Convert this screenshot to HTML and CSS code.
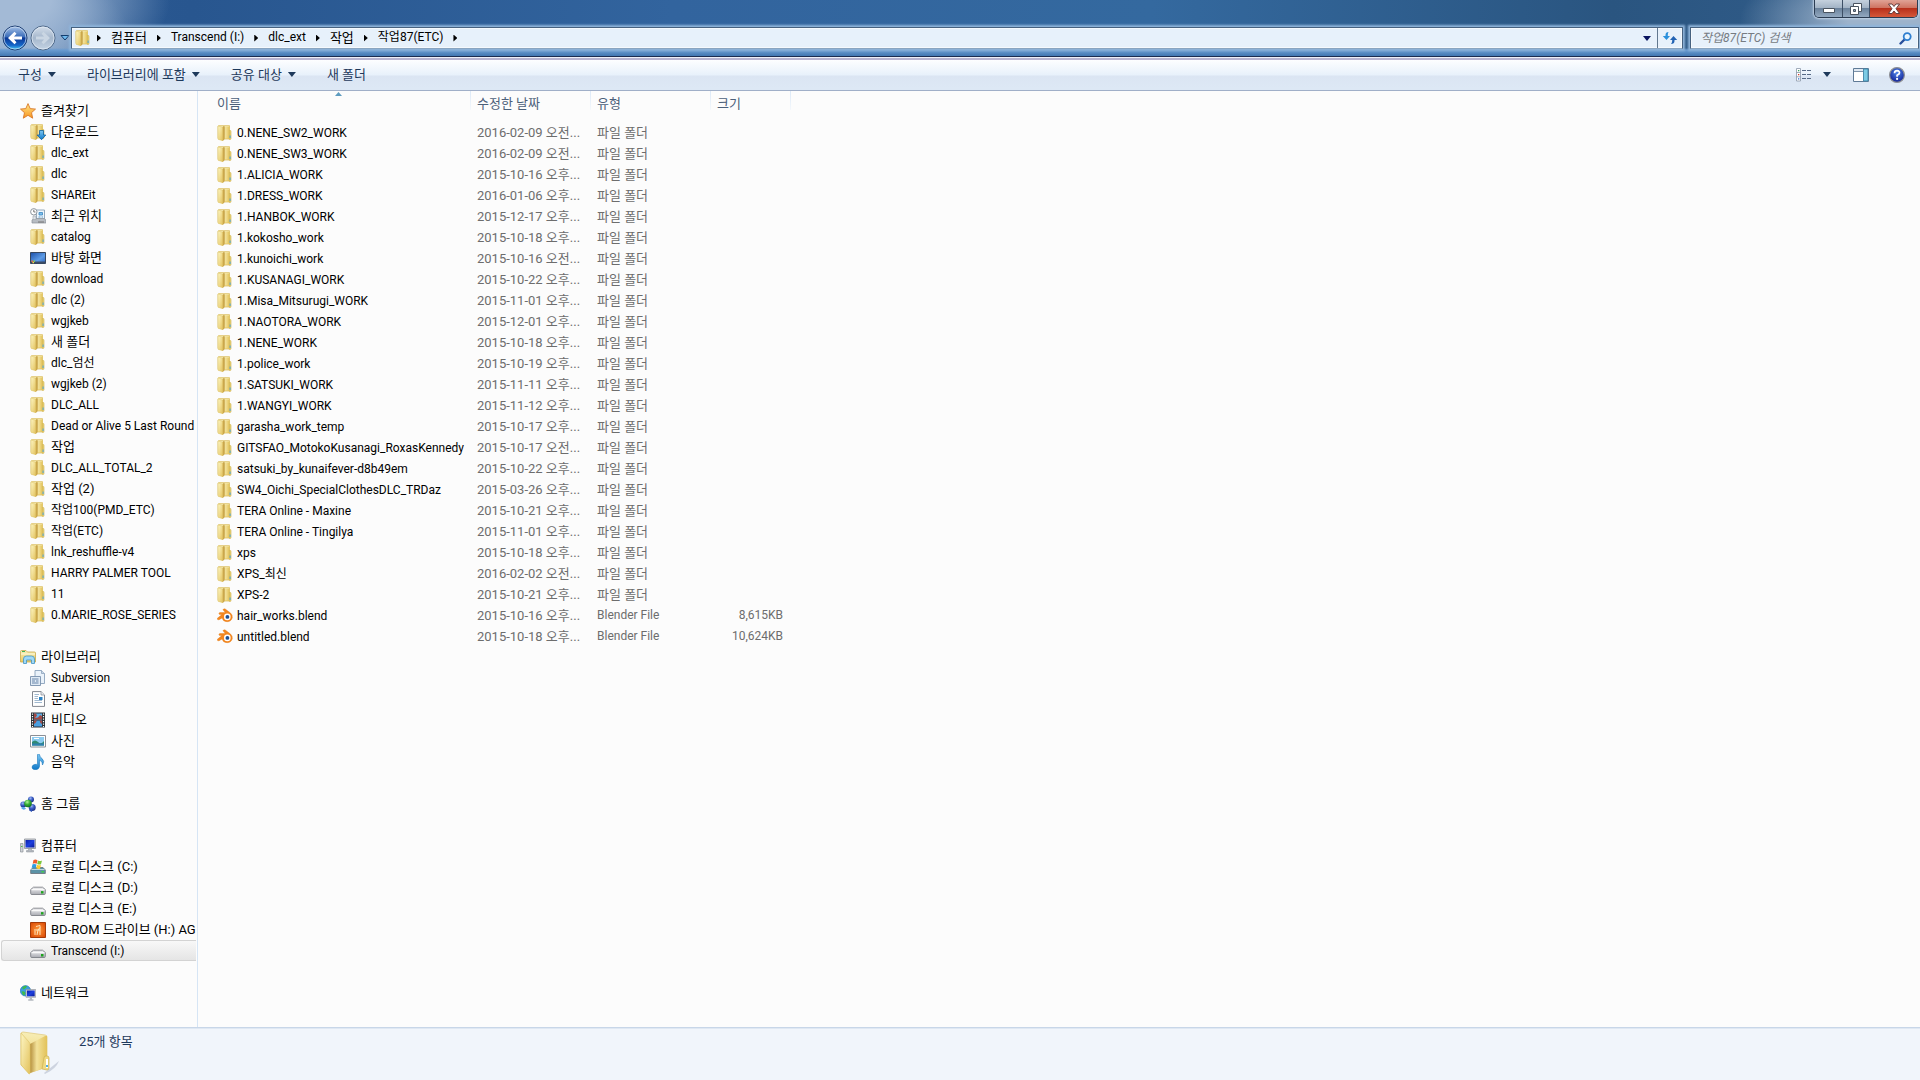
FILE: index.html
```
<!DOCTYPE html>
<html lang="ko">
<head>
<meta charset="utf-8">
<title>작업87(ETC)</title>
<link rel="stylesheet" href="styles.css">
</head>
<body>
<svg class="defs" width="0" height="0" aria-hidden="true">
  <defs>
    <linearGradient id="gFront" x1="0" y1="0" x2="1" y2="1"><stop offset="0" stop-color="#fdf6c4"/><stop offset="1" stop-color="#e3c25c"/></linearGradient>
    <linearGradient id="gBack" x1="0" y1="0" x2="1" y2="0"><stop offset="0" stop-color="#b58f3c"/><stop offset=".4" stop-color="#f3e29a"/><stop offset="1" stop-color="#e2c25a"/></linearGradient>
    <linearGradient id="gBack2" x1="0" y1="0" x2="0" y2="1"><stop offset="0" stop-color="#f7eeb8"/><stop offset="1" stop-color="#ecca5e"/></linearGradient>
    <linearGradient id="gStar" x1="0" y1="0" x2="0" y2="1"><stop offset="0" stop-color="#ffe98c"/><stop offset="1" stop-color="#f7941d"/></linearGradient>
    <linearGradient id="gBlue" x1="0" y1="0" x2="0" y2="1"><stop offset="0" stop-color="#7cc8f4"/><stop offset="1" stop-color="#0f78c8"/></linearGradient>
    <linearGradient id="gScreen" x1="0" y1="0" x2="1" y2="1"><stop offset="0" stop-color="#0a1fa8"/><stop offset=".5" stop-color="#1d3fe0"/><stop offset="1" stop-color="#0b1c96"/></linearGradient>
    <linearGradient id="gDesk" x1="0" y1="0" x2="1" y2="1"><stop offset="0" stop-color="#1b4fa8"/><stop offset=".6" stop-color="#5e9ce6"/><stop offset="1" stop-color="#2a61ba"/></linearGradient>
    <linearGradient id="gDrive" x1="0" y1="0" x2="0" y2="1"><stop offset="0" stop-color="#f4f4f6"/><stop offset="1" stop-color="#a9abb2"/></linearGradient>
    <linearGradient id="gNav" x1="0" y1="0" x2="0" y2="1"><stop offset="0" stop-color="#a9c4e8"/><stop offset=".45" stop-color="#3b6dba"/><stop offset=".5" stop-color="#0b3794"/><stop offset=".8" stop-color="#1565c8"/><stop offset="1" stop-color="#46d2f8"/></linearGradient>
    <linearGradient id="gNavOff" x1="0" y1="0" x2="0" y2="1"><stop offset="0" stop-color="#d5dfeb"/><stop offset=".5" stop-color="#a5b7cc"/><stop offset="1" stop-color="#c5d4e4"/></linearGradient>
    <radialGradient id="gHelp" cx=".5" cy=".35" r=".6"><stop offset="0" stop-color="#4f86ea"/><stop offset="1" stop-color="#16279a"/></radialGradient>
    <radialGradient id="gBall" cx=".4" cy=".3" r=".7"><stop offset="0" stop-color="#9db8f4"/><stop offset=".5" stop-color="#3a5cc4"/><stop offset="1" stop-color="#1b2f86"/></radialGradient>
    <radialGradient id="gBallG" cx=".4" cy=".3" r=".7"><stop offset="0" stop-color="#b4f49a"/><stop offset=".5" stop-color="#35ae35"/><stop offset="1" stop-color="#14701c"/></radialGradient>
    <radialGradient id="gDisc" cx=".5" cy=".5" r=".7"><stop offset="0" stop-color="#ff9a3c"/><stop offset="1" stop-color="#d84300"/></radialGradient>
    <symbol id="folder" viewBox="0 0 16 16">
      <path d="M1 1.5Q1 .6 2 .6H12.500V14H2Q1 14 1 13Z" fill="url(#gBack2)" stroke="#dcc26a" stroke-width=".8"/>
      <path d="M6 1.500H12.500V13.500H7.500Z" fill="url(#gBack)"/>
      <path d="M12.400 5.500H13.500Q14 5.500 14 6.500V13.500Q14 14.500 13 14.500H12.400Z" fill="#e9d377" stroke="#cfae4a" stroke-width=".6"/>
      <path d="M12.600 10.500H13.600V13H12.600Z" fill="#4aa6e0"/>
      <path d="M5 2.300L7.400 1V14.500L5.700 16L5 15.400Z" fill="#c9a548"/>
      <path d="M1 1L5.700 2.300V15.800L1 14.200Z" fill="url(#gFront)" stroke="#dfc56b" stroke-width=".5"/>
    </symbol>
    <symbol id="bigfolder" viewBox="0 0 40 44">
      <path d="M24 42L39 30Q36 38 25 43Z" fill="#8995ab" opacity=".35"/>
      <path d="M1 3Q1 1 3 1L25 4Q27 4 27 6V36L9 42L1 34Z" fill="url(#gBack2)" stroke="#e2cd84" stroke-width=".8"/>
      <path d="M10 13L25 5H27V36L10 42Z" fill="url(#gBack)"/>
      <path d="M24 27Q24 25 26 25H27Q29 25 29 27V37Q29 39 27 39L22 38Z" fill="#efd980" stroke="#cdb052" stroke-width=".7"/>
      <path d="M26 28H28V37H26Z" fill="#fff"/><path d="M26 34H28V36H26Z" fill="#50aee4"/>
      <path d="M1 2L9 11Q10 12 10 14V42Q10 43 9 43L2 35Q1 34 1 33Z" fill="url(#gFront)" stroke="#e0c56b" stroke-width=".7"/>
    </symbol>
    <symbol id="star" viewBox="0 0 16 16"><path d="M8 .6L10.200 5.600L15.500 6.100L11.500 9.700L12.700 15.200L8 12.300L3.300 15.200L4.500 9.700L.5 6.100L5.800 5.600Z" fill="url(#gStar)" stroke="#d9782a" stroke-width=".9"/></symbol>
    <symbol id="download" viewBox="0 0 16 16"><use href="#folder" width="16" height="16"/><path d="M9.500 6.500H13.500V11H15.800L11.500 15.700L7.200 11H9.500Z" fill="url(#gBlue)" stroke="#0c5f9f" stroke-width=".8"/></symbol>
    <symbol id="recent" viewBox="0 0 16 16">
      <path d="M6.500 2H14.500V11H6.500Z" fill="#eef6fc" stroke="#8aa0b4" stroke-width=".9"/><path d="M9 4.500H12.500V7H9ZM8.500 9H10.500M11.500 9H13" fill="#7cc0ee" stroke="#3a86c0" stroke-width=".8"/>
      <path d="M2 12L4 10.500H14L16 12V15H2Z" fill="#b7bcc2" stroke="#8a9098" stroke-width=".7"/><path d="M8 14H14" stroke="#777"/><path d="M3 8H6V11.500H3Z" fill="#dfe3e7" stroke="#9aa2aa" stroke-width=".6"/>
      <circle cx="3.800" cy="3.800" r="3.200" fill="#fff" stroke="#8f979f"/><path d="M3.800 1.800V4H5.500" fill="none" stroke="#555" stroke-width=".8"/>
    </symbol>
    <symbol id="desktop" viewBox="0 0 16 16"><path d="M.5 2.500H15.500V13.500H.5Z" fill="url(#gDesk)" stroke="#37475f"/><path d="M1 11.500H15V13.200H1Z" fill="#3c4c66"/><path d="M1.500 10.500H3V12H1.500Z" fill="#ef6b36"/><path d="M3.500 10.500H5V12H3.500Z" fill="#8bd04a"/><path d="M2.500 12H4V13.200H2.500Z" fill="#ffd34a"/></symbol>
    <symbol id="library" viewBox="0 0 16 16"><path d="M.5 2.500Q.5 1.500 1.500 1.500H6L7.500 3H14.500Q15.500 3 15.500 4V13H.5Z" fill="url(#gBack2)" stroke="#c9a94c" stroke-width=".8"/><path d="M1 5H15" stroke="#fffbe0"/><path d="M2 2.500H5" stroke="#3db35a"/><path d="M3.500 14.500V10Q3.500 7 6.500 7H11.500Q14.500 7 14.500 10V14.500H11.500V11H6.500V14.500Z" fill="#9fd8f6" stroke="#4494c4" stroke-width=".8"/></symbol>
    <symbol id="subversion" viewBox="0 0 16 16"><path d="M5 .500H11.500L14.500 3.500V13.500H5Z" fill="#eaf2fa" stroke="#8ba2bb" stroke-width=".9"/><path d="M11.500 .500V3.500H14.500" fill="#c9d8e8" stroke="#8ba2bb" stroke-width=".8"/><path d="M.5 6.500H10.500V15.500H.5Z" fill="#dfeaf5" stroke="#7890ac" stroke-width=".9"/><path d="M2 9H8.500M2 11H5M6 11H8.500M2 13H8.500" stroke="#5c7ba2" stroke-width=".9"/></symbol>
    <symbol id="docs" viewBox="0 0 16 16"><path d="M2.500 .600H11L14.500 4V15.400H2.500Z" fill="#fff" stroke="#828790"/><path d="M11 .600V4H14.500" fill="#e6e9ee" stroke="#828790" stroke-width=".7"/><path d="M4.500 3.500H9M4.500 5.500H8M4.500 7.500H8M4.500 9.500H12M4.500 11.500H12" stroke="#89a7c4" stroke-width=".8"/><path d="M9 6H12.500V9H9Z" fill="#2b82c4"/></symbol>
    <symbol id="video" viewBox="0 0 16 16"><path d="M1 .500H15V15.500H1Z" fill="#2b3036"/><path d="M4 1.500H12V7.500H4Z" fill="#5cb0e8"/><path d="M4 8.500H12V14.500H4Z" fill="#4a9fe0"/><path d="M4 1.500H6L7 3.500L5 6L8 5.500L10 3L12 4V7.500H4ZM4 8.500H7L5.500 11L4 12ZM12 8.500H9.500L10.500 11L12 12Z" fill="#a34a44"/><path d="M2.500 1.500V15M13.500 1.500V15" stroke="#fff" stroke-width="1.200" stroke-dasharray="1.200 1.300"/></symbol>
    <symbol id="photo" viewBox="0 0 16 16"><path d="M.5 2.500H15.500V14H.5Z" fill="#fff" stroke="#8a8f96"/><path d="M2 4H14V12.500H2Z" fill="#8ccbf0"/><path d="M2 9Q5 6 8 9T14 8V12.500H2Z" fill="#2e8a73"/><path d="M2 10.500H14V12.500H2Z" fill="#2f7fb0"/><path d="M4 5.500H9" stroke="#fff"/></symbol>
    <symbol id="music" viewBox="0 0 16 16"><path d="M7.500 .500Q8.500 .100 9.500 .500Q9.500 3 12 4.500Q15 7 12.500 11Q13 7.500 9.500 6V12.500Q9 15.500 5.500 15.700Q2 15.700 2 13Q2.500 10.300 6 10.300Q7 10.300 7.500 10.700Z" fill="url(#gBlue)" stroke="#1a78bd" stroke-width=".6"/></symbol>
    <symbol id="homegroup" viewBox="0 0 16 16"><circle cx="11" cy="3.500" r="3" fill="url(#gBall)"/><circle cx="3.300" cy="8.500" r="3" fill="url(#gBall)"/><circle cx="12.200" cy="11.500" r="3.500" fill="url(#gBall)"/><circle cx="8" cy="7.500" r="3.800" fill="url(#gBallG)"/><path d="M1 12Q3 10 6 12.500Q5 14 3 13.500Z" fill="#58a8e8"/><path d="M9 14.500L12 13V16Z" fill="#2c53b8"/></symbol>
    <symbol id="computer" viewBox="0 0 16 16"><path d="M.5 5.500H3V14H.5Z" fill="#cfd3d8" stroke="#8c9299" stroke-width=".7"/><path d="M1 8.500H2.500" stroke="#4bc04b"/><path d="M4.500 1H15.500V10.500H4.500Z" fill="#d5d8dd" stroke="#8a9098" stroke-width=".8"/><path d="M5.500 2H14.500V9.500H5.500Z" fill="url(#gScreen)"/><path d="M8.500 10.500H11.500V12.500H13.500V14H6.500V12.500H8.500Z" fill="#b4b9c0" stroke="#888e96" stroke-width=".5"/></symbol>
    <symbol id="drive" viewBox="0 0 16 16"><path d="M.7 9.500L3.500 7.200H12.500L15.300 9.500V13.500Q15.300 14.500 14.300 14.500H1.700Q.7 14.500 .7 13.500Z" fill="url(#gDrive)" stroke="#7d8087" stroke-width=".9"/><path d="M1.500 9.700H14.500" stroke="#fff"/><path d="M11 12.300H13.500" stroke="#1da31d" stroke-width="2.400"/></symbol>
    <symbol id="sysdrive" viewBox="0 0 16 16"><path d="M.7 11L3 8.500H13L15.300 11V14.500H.7Z" fill="#5b92a6" stroke="#6c7780" stroke-width=".9"/><path d="M1.500 10.500H14.500" stroke="#d7e5ec" stroke-width=".8"/><path d="M11.500 12.800H13.800" stroke="#43d043" stroke-width="1.500"/><path d="M3.500 1Q5.500 0 7.500 1.200L6.700 4.800Q5 3.800 2.700 4.700Z" fill="#ee5a2c"/><path d="M8 1.500Q10 2.500 12 1.500L11 5.200Q9.500 6 7.200 5Z" fill="#7dc63c"/><path d="M2.500 5.300Q4.500 4.500 6.500 5.500L5.700 9Q4 8.200 1.700 9Z" fill="#2c9ce4"/><path d="M7 5.800Q9 6.800 11 6L10 9.700Q8.500 10.200 6.200 9.300Z" fill="#ffcb2e"/></symbol>
    <symbol id="bdrom" viewBox="0 0 16 16"><path d="M.5 .500H15.500V15.500H.5Z" fill="url(#gDisc)" stroke="#a43a08"/><path d="M5 13V7M6 4.500L10 3.500V13M7 13L8 8L10 5.500M6 8H10" fill="none" stroke="#ffe2b8"/></symbol>
    <symbol id="network" viewBox="0 0 16 16"><circle cx="5.500" cy="5.800" r="5.200" fill="#3a9fe0" stroke="#1f6fae" stroke-width=".6"/><path d="M2 3Q4.500 0 7 1.200Q6 4 3.500 4.500ZM1.500 6.500Q5 5.500 5.500 8.500Q4.500 11 3 10Z" fill="#3dbb4c"/><path d="M6 4.500H15.700V12.300H6Z" fill="#d5d8dd" stroke="#868c94" stroke-width=".6"/><path d="M7 5.500H14.700V11.300H7Z" fill="url(#gScreen)"/><path d="M9.700 12.300H12V14.300H13.500V15.700H8.200V14.300H9.700Z" fill="#b4b9c0"/></symbol>
    <symbol id="blend" viewBox="0 0 16 16"><path d="M6 1.800Q6.500 .400 8.200 1L13.500 5Q16 7.200 15.300 9.800Q14 13.800 10 13.700Q5.800 13.500 5.200 9.900L2 11.800Q.2 12.200 .3 10.300L5 6.600H2.600Q1.200 5.500 2.600 4.600H8.300Z" fill="#f5871f" stroke="#e0760f" stroke-width=".4"/><circle cx="10.300" cy="8.900" r="3.300" fill="#fff"/><circle cx="10.400" cy="8.900" r="1.900" fill="#1d4f92"/></symbol>
  </defs>
</svg>

<div class="window">
  <header class="frame">
    <div class="caption">
      <div class="caption-buttons">
        <button class="cap min" aria-label="최소화"><svg width="14" height="14" viewBox="0 0 14 14"><path d="M1.500 6.500H12.500V10.500H1.500Z" fill="#fff" stroke="#4a5460"/></svg></button>
        <button class="cap max" aria-label="이전 크기로 복원"><svg width="14" height="14" viewBox="0 0 14 14"><path d="M4.500 1.500H12.500V9.500H4.500Z" fill="#fff" stroke="#4a5460"/><path d="M1.500 4.500H9.500V12.500H1.500Z" fill="#fff" stroke="#4a5460"/><path d="M4.500 7.500H6.500V9.500H4.500Z" fill="#8aa0b8" stroke="#4a5460"/></svg></button>
        <button class="cap close" aria-label="닫기"><svg width="14" height="14" viewBox="0 0 14 14"><path d="M1.500 2H5L7 4.500L9 2H12.500L9 6.700L12.500 11.500H9L7 9L5 11.500H1.500L5 6.700Z" fill="#fff" stroke="#5b3636" stroke-width=".9"/></svg></button>
      </div>
    </div>
    <div class="navbar">
      <div class="travel">
        <button class="round" aria-label="뒤로"><svg width="26" height="26" viewBox="0 0 26 26"><circle cx="13" cy="13" r="12" fill="url(#gNav)" stroke="#1f3f73"/><circle cx="13" cy="13" r="11" fill="none" stroke="#cfe0f4" stroke-opacity=".7"/><path d="M6 13L12.500 6.800L14.500 8.800L12 11.500H20V14.500H12L14.500 17.200L12.500 19.200Z" fill="#fff"/></svg></button>
        <button class="round" aria-label="앞으로"><svg width="26" height="26" viewBox="0 0 26 26"><circle cx="13" cy="13" r="12" fill="url(#gNavOff)" stroke="#4e6888"/><circle cx="13" cy="13" r="11" fill="none" stroke="#e4edf6" stroke-opacity=".7"/><path d="M20 13L13.500 6.800L11.500 8.800L14 11.500H6V14.500H14L11.500 17.200L13.500 19.200Z" fill="#cad6e3"/></svg></button>
        <button class="history" aria-label="최근 페이지"><svg width="10" height="6" viewBox="0 0 10 6"><path d="M1 .500H9L5 5Z" fill="#6fb9ee" stroke="#123c6e"/></svg></button>
      </div>
      <div class="address">
        <svg class="ico" width="16" height="16"><use href="#folder"/></svg>
        <nav class="crumbs" aria-label="주소">
          <i class="arrow"></i><a class="ko" href="#">컴퓨터</a>
          <i class="arrow"></i><a href="#">Transcend (I:)</a>
          <i class="arrow"></i><a href="#">dlc_ext</a>
          <i class="arrow"></i><a class="ko" href="#">작업</a>
          <i class="arrow"></i><a href="#">작업87(ETC)</a>
          <i class="arrow"></i>
        </nav>
        <button class="addr-drop" aria-label="이전 위치"><svg width="8" height="5" viewBox="0 0 8 5"><path d="M0 0H8L4 5Z" fill="#0a1560"/></svg></button>
        <button class="refresh" aria-label="새로 고침"><svg width="16" height="14" viewBox="0 0 16 14"><path d="M6.500 1Q3.500 1 3.500 4V5H.8L4.500 9L8 5H5.800V4Q5.800 2.500 6.500 1Z" fill="#2a90dc"/><path d="M9 13Q12.500 13 12.500 10V9H15.200L11.500 5L8 9H10.200V10Q10.200 11.500 9 13Z" fill="#2263b4"/></svg></button>
      </div>
      <label class="search">
        <input type="search" placeholder="작업87(ETC) 검색" aria-label="작업87(ETC) 검색">
        <svg width="13" height="13" viewBox="0 0 13 13"><path d="M1.500 11.500L5.500 7.500" stroke="#274f9c" stroke-width="2.400" stroke-linecap="round"/><circle cx="8.200" cy="4.600" r="3.500" fill="#eaf6ff" stroke="#2f7fd0" stroke-width="1.800"/></svg>
      </label>
    </div>
  </header>

  <div class="toolbar">
    <button>구성<i class="down"></i></button>
    <button>라이브러리에 포함<i class="down"></i></button>
    <button>공유 대상<i class="down"></i></button>
    <button>새 폴더</button>
    <div class="tools">
      <button aria-label="보기 변경"><svg width="16" height="14" viewBox="0 0 16 14"><path d="M.5 .500H4.500V13H.5ZM.5 4.500H4.500M.5 8.800H4.500" fill="#fff" stroke="#8a97a8" stroke-width=".8"/><path d="M2 2H3.300V3.300H2Z" fill="#3aa05a"/><path d="M2 6H3.300V7.300H2Z" fill="#d03a2a"/><path d="M2 10.300H3.300V11.600H2Z" fill="#2a6ad0"/><path d="M6 2.500H10M11 2.500H15M6 6.500H10M11 6.500H15M6 10.500H10M11 10.500H15" stroke="#566a86"/></svg></button>
      <button class="more" aria-label="추가 옵션"><i class="down"></i></button>
      <button aria-label="미리 보기 창"><svg width="16" height="14" viewBox="0 0 16 14"><path d="M.5 .500H15.500V13.500H.5Z" fill="#fff" stroke="#5f7a96"/><path d="M1 1H10V3.500H1Z" fill="#dfe8f2"/><path d="M1 3.500H10" stroke="#5f7a96" stroke-width=".8"/><path d="M10.500 1H15V13H10.500Z" fill="#7ccbe4" stroke="#3f86a8" stroke-width=".9"/></svg></button>
      <button aria-label="도움말"><svg width="16" height="16" viewBox="0 0 16 16"><circle cx="8" cy="8" r="7.400" fill="url(#gHelp)" stroke="#8e9094" stroke-width="1.200"/><path d="M5.500 6.200Q5.600 3.700 8.100 3.700Q10.600 3.800 10.500 5.900Q10.400 7.300 8.100 8.300V9.700" fill="none" stroke="#fff" stroke-width="1.700"/><circle cx="8.100" cy="11.900" r="1.100" fill="#fff"/></svg></button>
    </div>
  </div>

  <div class="body">
    <nav class="tree" aria-label="탐색 창">
      <section>
        <a class="root ko" href="#"><svg class="ico" width="16" height="16"><use href="#star"/></svg>즐겨찾기</a>
        <a class="ko" href="#"><svg class="ico" width="16" height="16"><use href="#download"/></svg>다운로드</a>
        <a href="#"><svg class="ico" width="16" height="16"><use href="#folder"/></svg>dlc_ext</a>
        <a href="#"><svg class="ico" width="16" height="16"><use href="#folder"/></svg>dlc</a>
        <a href="#"><svg class="ico" width="16" height="16"><use href="#folder"/></svg>SHAREit</a>
        <a class="ko" href="#"><svg class="ico" width="16" height="16"><use href="#recent"/></svg>최근 위치</a>
        <a href="#"><svg class="ico" width="16" height="16"><use href="#folder"/></svg>catalog</a>
        <a class="ko" href="#"><svg class="ico" width="16" height="16"><use href="#desktop"/></svg>바탕 화면</a>
        <a href="#"><svg class="ico" width="16" height="16"><use href="#folder"/></svg>download</a>
        <a href="#"><svg class="ico" width="16" height="16"><use href="#folder"/></svg>dlc (2)</a>
        <a href="#"><svg class="ico" width="16" height="16"><use href="#folder"/></svg>wgjkeb</a>
        <a class="ko" href="#"><svg class="ico" width="16" height="16"><use href="#folder"/></svg>새 폴더</a>
        <a href="#"><svg class="ico" width="16" height="16"><use href="#folder"/></svg>dlc_엄선</a>
        <a href="#"><svg class="ico" width="16" height="16"><use href="#folder"/></svg>wgjkeb (2)</a>
        <a href="#"><svg class="ico" width="16" height="16"><use href="#folder"/></svg>DLC_ALL</a>
        <a href="#"><svg class="ico" width="16" height="16"><use href="#folder"/></svg>Dead or Alive 5 Last Round</a>
        <a class="ko" href="#"><svg class="ico" width="16" height="16"><use href="#folder"/></svg>작업</a>
        <a href="#"><svg class="ico" width="16" height="16"><use href="#folder"/></svg>DLC_ALL_TOTAL_2</a>
        <a class="ko" href="#"><svg class="ico" width="16" height="16"><use href="#folder"/></svg>작업 (2)</a>
        <a href="#"><svg class="ico" width="16" height="16"><use href="#folder"/></svg>작업100(PMD_ETC)</a>
        <a href="#"><svg class="ico" width="16" height="16"><use href="#folder"/></svg>작업(ETC)</a>
        <a href="#"><svg class="ico" width="16" height="16"><use href="#folder"/></svg>lnk_reshuffle-v4</a>
        <a href="#"><svg class="ico" width="16" height="16"><use href="#folder"/></svg>HARRY PALMER TOOL</a>
        <a href="#"><svg class="ico" width="16" height="16"><use href="#folder"/></svg>11</a>
        <a href="#"><svg class="ico" width="16" height="16"><use href="#folder"/></svg>0.MARIE_ROSE_SERIES</a>
      </section>
      <section>
        <a class="root ko" href="#"><svg class="ico" width="16" height="16"><use href="#library"/></svg>라이브러리</a>
        <a href="#"><svg class="ico" width="16" height="16"><use href="#subversion"/></svg>Subversion</a>
        <a class="ko" href="#"><svg class="ico" width="16" height="16"><use href="#docs"/></svg>문서</a>
        <a class="ko" href="#"><svg class="ico" width="16" height="16"><use href="#video"/></svg>비디오</a>
        <a class="ko" href="#"><svg class="ico" width="16" height="16"><use href="#photo"/></svg>사진</a>
        <a class="ko" href="#"><svg class="ico" width="16" height="16"><use href="#music"/></svg>음악</a>
      </section>
      <section>
        <a class="root ko" href="#"><svg class="ico" width="16" height="16"><use href="#homegroup"/></svg>홈 그룹</a>
      </section>
      <section>
        <a class="root ko" href="#"><svg class="ico" width="16" height="16"><use href="#computer"/></svg>컴퓨터</a>
        <a class="ko" href="#"><svg class="ico" width="16" height="16"><use href="#sysdrive"/></svg>로컬 디스크 (C:)</a>
        <a class="ko" href="#"><svg class="ico" width="16" height="16"><use href="#drive"/></svg>로컬 디스크 (D:)</a>
        <a class="ko" href="#"><svg class="ico" width="16" height="16"><use href="#drive"/></svg>로컬 디스크 (E:)</a>
        <a class="ko" href="#"><svg class="ico" width="16" height="16"><use href="#bdrom"/></svg>BD-ROM 드라이브 (H:) AG</a>
        <a class="selected" href="#"><svg class="ico" width="16" height="16"><use href="#drive"/></svg>Transcend (I:)</a>
      </section>
      <section>
        <a class="root ko" href="#"><svg class="ico" width="16" height="16"><use href="#network"/></svg>네트워크</a>
      </section>
    </nav>

    <main class="files">
      <table>
        <colgroup><col class="c-name"><col class="c-date"><col class="c-type"><col class="c-size"></colgroup>
        <thead>
          <tr><th>이름<svg class="sort" width="7" height="4" viewBox="0 0 7 4"><path d="M0 4L3.500 0L7 4Z" fill="#5d9bbf"/></svg></th><th>수정한 날짜</th><th>유형</th><th>크기</th></tr>
        </thead>
        <tbody>
          <tr><td><svg class="ico" width="16" height="16"><use href="#folder"/></svg>0.NENE_SW2_WORK</td><td>2016-02-09 오전...</td><td>파일 폴더</td><td></td></tr>
          <tr><td><svg class="ico" width="16" height="16"><use href="#folder"/></svg>0.NENE_SW3_WORK</td><td>2016-02-09 오전...</td><td>파일 폴더</td><td></td></tr>
          <tr><td><svg class="ico" width="16" height="16"><use href="#folder"/></svg>1.ALICIA_WORK</td><td>2015-10-16 오후...</td><td>파일 폴더</td><td></td></tr>
          <tr><td><svg class="ico" width="16" height="16"><use href="#folder"/></svg>1.DRESS_WORK</td><td>2016-01-06 오후...</td><td>파일 폴더</td><td></td></tr>
          <tr><td><svg class="ico" width="16" height="16"><use href="#folder"/></svg>1.HANBOK_WORK</td><td>2015-12-17 오후...</td><td>파일 폴더</td><td></td></tr>
          <tr><td><svg class="ico" width="16" height="16"><use href="#folder"/></svg>1.kokosho_work</td><td>2015-10-18 오후...</td><td>파일 폴더</td><td></td></tr>
          <tr><td><svg class="ico" width="16" height="16"><use href="#folder"/></svg>1.kunoichi_work</td><td>2015-10-16 오전...</td><td>파일 폴더</td><td></td></tr>
          <tr><td><svg class="ico" width="16" height="16"><use href="#folder"/></svg>1.KUSANAGI_WORK</td><td>2015-10-22 오후...</td><td>파일 폴더</td><td></td></tr>
          <tr><td><svg class="ico" width="16" height="16"><use href="#folder"/></svg>1.Misa_Mitsurugi_WORK</td><td>2015-11-01 오후...</td><td>파일 폴더</td><td></td></tr>
          <tr><td><svg class="ico" width="16" height="16"><use href="#folder"/></svg>1.NAOTORA_WORK</td><td>2015-12-01 오후...</td><td>파일 폴더</td><td></td></tr>
          <tr><td><svg class="ico" width="16" height="16"><use href="#folder"/></svg>1.NENE_WORK</td><td>2015-10-18 오후...</td><td>파일 폴더</td><td></td></tr>
          <tr><td><svg class="ico" width="16" height="16"><use href="#folder"/></svg>1.police_work</td><td>2015-10-19 오후...</td><td>파일 폴더</td><td></td></tr>
          <tr><td><svg class="ico" width="16" height="16"><use href="#folder"/></svg>1.SATSUKI_WORK</td><td>2015-11-11 오후...</td><td>파일 폴더</td><td></td></tr>
          <tr><td><svg class="ico" width="16" height="16"><use href="#folder"/></svg>1.WANGYI_WORK</td><td>2015-11-12 오후...</td><td>파일 폴더</td><td></td></tr>
          <tr><td><svg class="ico" width="16" height="16"><use href="#folder"/></svg>garasha_work_temp</td><td>2015-10-17 오후...</td><td>파일 폴더</td><td></td></tr>
          <tr><td><svg class="ico" width="16" height="16"><use href="#folder"/></svg>GITSFAO_MotokoKusanagi_RoxasKennedy</td><td>2015-10-17 오전...</td><td>파일 폴더</td><td></td></tr>
          <tr><td><svg class="ico" width="16" height="16"><use href="#folder"/></svg>satsuki_by_kunaifever-d8b49em</td><td>2015-10-22 오후...</td><td>파일 폴더</td><td></td></tr>
          <tr><td><svg class="ico" width="16" height="16"><use href="#folder"/></svg>SW4_Oichi_SpecialClothesDLC_TRDaz</td><td>2015-03-26 오후...</td><td>파일 폴더</td><td></td></tr>
          <tr><td><svg class="ico" width="16" height="16"><use href="#folder"/></svg>TERA Online - Maxine</td><td>2015-10-21 오후...</td><td>파일 폴더</td><td></td></tr>
          <tr><td><svg class="ico" width="16" height="16"><use href="#folder"/></svg>TERA Online - Tingilya</td><td>2015-11-01 오후...</td><td>파일 폴더</td><td></td></tr>
          <tr><td><svg class="ico" width="16" height="16"><use href="#folder"/></svg>xps</td><td>2015-10-18 오후...</td><td>파일 폴더</td><td></td></tr>
          <tr><td><svg class="ico" width="16" height="16"><use href="#folder"/></svg>XPS_최신</td><td>2016-02-02 오전...</td><td>파일 폴더</td><td></td></tr>
          <tr><td><svg class="ico" width="16" height="16"><use href="#folder"/></svg>XPS-2</td><td>2015-10-21 오후...</td><td>파일 폴더</td><td></td></tr>
          <tr><td><svg class="ico" width="16" height="16"><use href="#blend"/></svg>hair_works.blend</td><td>2015-10-16 오후...</td><td class="latin">Blender File</td><td>8,615KB</td></tr>
          <tr><td><svg class="ico" width="16" height="16"><use href="#blend"/></svg>untitled.blend</td><td>2015-10-18 오후...</td><td class="latin">Blender File</td><td>10,624KB</td></tr>
        </tbody>
      </table>
    </main>
  </div>

  <footer class="status">
    <svg width="40" height="44"><use href="#bigfolder"/></svg>
    <p>25개 항목</p>
  </footer>
</div>
</body>
</html>
```
FILE: styles.css
```
* { box-sizing: border-box; }

body {
  margin: 0;
  font: 12px/21px Roboto, "Noto Sans CJK KR", sans-serif;
  color: #000;
  background: #fcfcfc;
}

button {
  margin: 0;
  padding: 0;
  border: 0;
  background: none;
  color: inherit;
  font: inherit;
}

a { color: inherit; text-decoration: none; }
svg { display: block; flex: none; }
.defs { position: absolute; }

.window {
  display: flex;
  flex-direction: column;
  min-height: 100vh;
}

/* Glass frame: caption buttons and address bar */
.frame {
  border-bottom: 1px solid #1c2c50;
  background:
    linear-gradient(to bottom, transparent 48px, #6a9bd0 50px, #4378b2 56px),
    radial-gradient(ellipse 170px 90px at 0 0, #a3bad6 30%, transparent),
    radial-gradient(ellipse 130px 80px at 0 40px, #86a5cb 20%, transparent),
    radial-gradient(ellipse 180px 70px at 100% 20px, #9db3cb 40%, transparent),
    linear-gradient(to right, #2c5a94, #28568f 10%, #32649e 35%, #34699f 60%, #2a5580 84%, #335e8c);
}

.caption {
  display: flex;
  justify-content: flex-end;
  height: 26px;
  padding-right: 2px;
}

.caption-buttons {
  display: flex;
  height: 18px;
  border: 1px solid #2b3c52;
  border-top: 0;
  border-radius: 0 0 5px 5px;
  box-shadow: 0 0 2px 1px #c3d3e6;
  overflow: hidden;
}

.cap {
  display: grid;
  place-items: center;
  width: 28px;
  border-right: 1px solid #3d4f66;
  background: linear-gradient(#c5d1de, #a3b4c6 45%, #6b829c 50%, #93a9c0);
}
.cap.max { width: 27px; }
.cap.close {
  width: 47px;
  border-right: 0;
  background: linear-gradient(#e0a396, #cf7462 45%, #b8301b 50%, #d5583a);
}

.navbar {
  display: flex;
  align-items: center;
  height: 30px;
  padding: 0 1px 6px 2px;
}

.travel {
  display: flex;
  align-items: center;
  gap: 2px;
  width: 69px;
  height: 26px;
}
.history { margin-left: 2px; }

.address,
.search {
  display: flex;
  align-items: center;
  height: 22px;
  border: 1px solid #46617f;
  border-bottom-color: #8aa5c0;
  background: #e7f1fb;
  box-shadow: inset 0 0 0 1px #f5f9fd, 0 0 2px 2px #8fb4da;
}

.address {
  flex: 1;
  min-width: 0;
  padding-left: 3px;
}

.crumbs {
  display: flex;
  flex: 1;
  align-items: center;
  padding: 0 0 2px 6px;
}
.crumbs a { padding: 0 10px; }

.arrow {
  width: 4px;
  height: 7px;
  margin-top: 2px;
  background: #000;
  clip-path: polygon(0 0, 100% 50%, 0 100%);
}

.addr-drop { display: grid; place-items: center; width: 21px; height: 20px; }
.refresh {
  display: grid;
  place-items: center;
  width: 25px;
  height: 20px;
  border-left: 1px solid #62788f;
}

.search {
  width: 229px;
  margin-left: 7px;
  padding: 0 6px 0 10px;
}
.search input {
  flex: 1;
  min-width: 0;
  padding: 0;
  border: 0;
  outline: 0;
  background: none;
  font: italic 12px/20px Roboto, "Noto Sans CJK KR", sans-serif;
}
.search input::placeholder { color: #767b82; opacity: 1; }

/* Command bar */
.toolbar {
  display: flex;
  align-items: center;
  gap: 31px;
  height: 34px;
  padding: 1px 15px 0 18px;
  border-top: 1px solid #eef0f8;
  border-bottom: 1px solid #a0afc8;
  background: linear-gradient(#b7b3d0 0 2px, #fdfeff 2px, #e8f1fb 17px, #dbe5f3 18px, #dde8f5 30px);
  color: #1e395b;
  font-size: 13px;
}
.toolbar button {
  display: flex;
  align-items: center;
  gap: 6px;
}
.down {
  width: 8px;
  height: 5px;
  background: #1e395b;
  clip-path: polygon(0 0, 100% 0, 50% 100%);
}
.tools {
  display: flex;
  align-items: center;
  gap: 20px;
  margin-left: auto;
}
.tools .more { margin: 0 2px 0 -9px; }

/* Navigation tree */
.body { display: flex; flex: 1; }

.tree {
  display: flex;
  flex-direction: column;
  flex: none;
  gap: 21px;
  width: 198px;
  padding: 9px 1px 24px;
  border-right: 1px solid #d6e5f5;
}
.tree a {
  display: flex;
  align-items: center;
  gap: 5px;
  height: 21px;
  padding: 2px 0 0 29px;
  overflow: hidden;
  white-space: nowrap;
}
.ico { margin-bottom: 2px; }
.address > .ico, .tree .ko .ico { margin-bottom: 0; }
.ko { font-size: 13px; }
.tree .ko { padding-top: 0; }
.tree .root { padding-left: 19px; }
.tree .selected {
  padding-left: 28px;
  border: 1px solid #d3d3d3;
  border-right: 0;
  border-radius: 3px 0 0 3px;
  background: linear-gradient(#f8f8f8, #e5e5e5);
}

/* File list */
.files { flex: 1; min-width: 0; }

table {
  width: 593px;
  table-layout: fixed;
  border-collapse: collapse;
}
.c-name { width: 273px; }
.c-date, .c-type { width: 120px; }
.c-size { width: 80px; }

th {
  position: relative;
  height: 31px;
  padding: 2px 6px 8px;
  background: linear-gradient(#dce9f7, #f4f8fc) right top / 1px 19px no-repeat;
  color: #4c607a;
  font-size: 13px;
  font-weight: 400;
  text-align: left;
}
th:first-child { padding-left: 19px; }
.sort {
  position: absolute;
  top: 1px;
  left: 50%;
}

td {
  height: 21px;
  padding: 0 6px;
  color: #6d6d6d;
  font-size: 13px;
  white-space: nowrap;
}
td:first-child {
  display: flex;
  align-items: center;
  gap: 4px;
  padding: 2px 0 0 19px;
  color: #000;
  font-size: 12px;
}
td.latin,
td:last-child { font-size: 12px; }
td:last-child { padding-right: 8px; text-align: right; }

/* Details pane */
.status {
  display: flex;
  gap: 19px;
  height: 53px;
  padding: 3px 20px;
  border-top: 1px solid #c8d6e8;
  background: #f1f5fb;
  box-shadow: inset 0 1px #dfe8f3;
  color: #1e395b;
  font-size: 13px;
}
.status p { margin: 0; }
```
